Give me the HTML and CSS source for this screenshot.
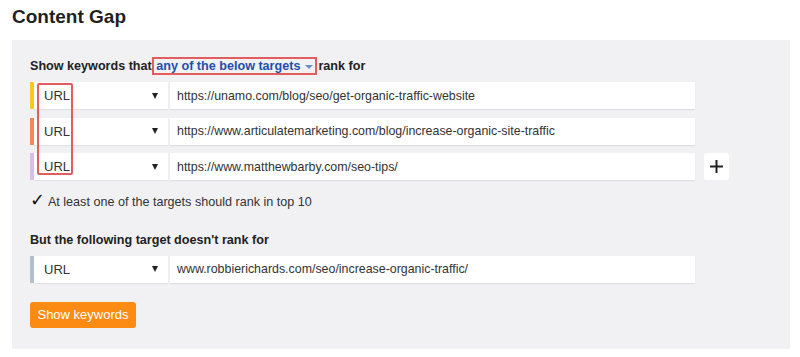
FILE: index.html
```html
<!DOCTYPE html>
<html lang="en">
<head>
    <meta charset="UTF-8">
    <meta name="viewport" content="width=device-width, initial-scale=1.0">
    <title>Content Gap</title>
    <link rel="stylesheet" href="styles.css">
</head>
<body>
    <h1>Content Gap</h1>
    <div class="panel">
        <div class="heading">
            Show keywords that
            <span class="mode">any of the below targets <span class="caret"></span></span>
            rank for
        </div>

        <div class="targets">
            <div class="row">
                <span class="bar yellow"></span>
                <div class="select">URL <span class="arrow"></span></div>
                <div class="url">https://unamo.com/blog/seo/get-organic-traffic-website</div>
            </div>
            <div class="row">
                <span class="bar orange"></span>
                <div class="select">URL <span class="arrow"></span></div>
                <div class="url">https://www.articulatemarketing.com/blog/increase-organic-site-traffic</div>
            </div>
            <div class="row">
                <span class="bar lilac"></span>
                <div class="select">URL <span class="arrow"></span></div>
                <div class="url">https://www.matthewbarby.com/seo-tips/</div>
                <button class="add">
                    <svg width="13" height="13" viewBox="0 0 13 13"><path d="M6.5 0v13M0 6.5h13" stroke="#222" stroke-width="2"/></svg>
                </button>
            </div>
            <div class="mark"></div>
        </div>

        <div class="check"><span class="tick">&#10003;</span> At least one of the targets should rank in top 10</div>

        <div class="heading second">But the following target doesn't rank for</div>

        <div class="row">
            <span class="bar grey"></span>
            <div class="select">URL <span class="arrow"></span></div>
            <div class="url">www.robbierichards.com/seo/increase-organic-traffic/</div>
        </div>

        <button class="submit">Show keywords</button>
    </div>
</body>
</html>
```

FILE: styles.css
```css
body {
    font-family: "Liberation Sans", Arial, sans-serif;
    background-color: #fff;
    color: #333;
    margin: 0;
    padding: 0;
}

h1 {
    font-size: 19px;
    font-weight: bold;
    color: #1f1f1f;
    margin: 0;
    padding: 5px 0 0 12px;
    height: 35px;
    line-height: 24px;
}

.panel {
    background-color: #f1f1f4;
    margin-left: 12px;
    width: 778px;
    padding: 17px 0 21px 18px;
    box-sizing: border-box;
}

.heading {
    font-size: 12.6px;
    font-weight: bold;
    color: #222;
    line-height: 18px;
    height: 18px;
    margin-bottom: 7px;
}

.mode {
    color: #1d4fae;
    border: 2px solid #e35d5f;
    padding: 0 2px;
    margin: 0 -2px 0 -3px;
}

.caret {
    display: inline-block;
    width: 0;
    height: 0;
    border-left: 4px solid transparent;
    border-right: 4px solid transparent;
    border-top: 4px solid #6f8cc4;
    vertical-align: middle;
    margin-left: 1px;
}

.targets {
    position: relative;
}

.row {
    display: flex;
    align-items: stretch;
    height: 27px;
    margin-bottom: 8.5px;
    font-size: 12.4px;
}

.bar {
    width: 4px;
}

.yellow { background-color: #f8c923; }
.orange { background-color: #f6875c; }
.lilac { background-color: #dcbde7; }
.grey { background-color: #b3bfcc; }

.select {
    background-color: #fff;
    width: 134px;
    display: flex;
    align-items: center;
    justify-content: space-between;
    padding: 0 10px 0 10px;
    box-sizing: border-box;
    color: #333;
    font-size: 13px;
    margin-right: 2px;
    box-shadow: 0 1px 1px rgba(0, 0, 0, 0.06);
}

.arrow {
    width: 0;
    height: 0;
    border-left: 3.5px solid transparent;
    border-right: 3.5px solid transparent;
    border-top: 6px solid #222;
}

.url {
    background-color: #fff;
    width: 525px;
    display: flex;
    align-items: center;
    padding-left: 7px;
    box-sizing: border-box;
    color: #333;
    box-shadow: 0 1px 1px rgba(0, 0, 0, 0.08);
}

.add {
    width: 25px;
    margin-left: 9px;
    border: none;
    border-radius: 3px;
    background-color: #fff;
    padding: 0;
    display: flex;
    align-items: center;
    justify-content: center;
}

.mark {
    position: absolute;
    left: 7px;
    top: 1px;
    width: 36px;
    height: 92px;
    border: 2px solid #e35d5f;
    border-radius: 2px;
    box-sizing: border-box;
}

.check {
    font-size: 12.6px;
    line-height: 18px;
    height: 18px;
    margin-top: 12.5px;
    color: #333;
}

.tick {
    font-family: "DejaVu Sans", sans-serif;
    font-size: 18px;
    line-height: 0;
    color: #111;
}

.heading.second {
    margin-top: 20px;
    margin-bottom: 7px;
}

.submit {
    display: block;
    margin-top: 19px;
    width: 106px;
    height: 26px;
    background-color: #fc8b14;
    color: #fff;
    border: none;
    border-radius: 3px;
    font-family: "Liberation Sans", Arial, sans-serif;
    font-size: 13px;
    padding: 0;
}
```
